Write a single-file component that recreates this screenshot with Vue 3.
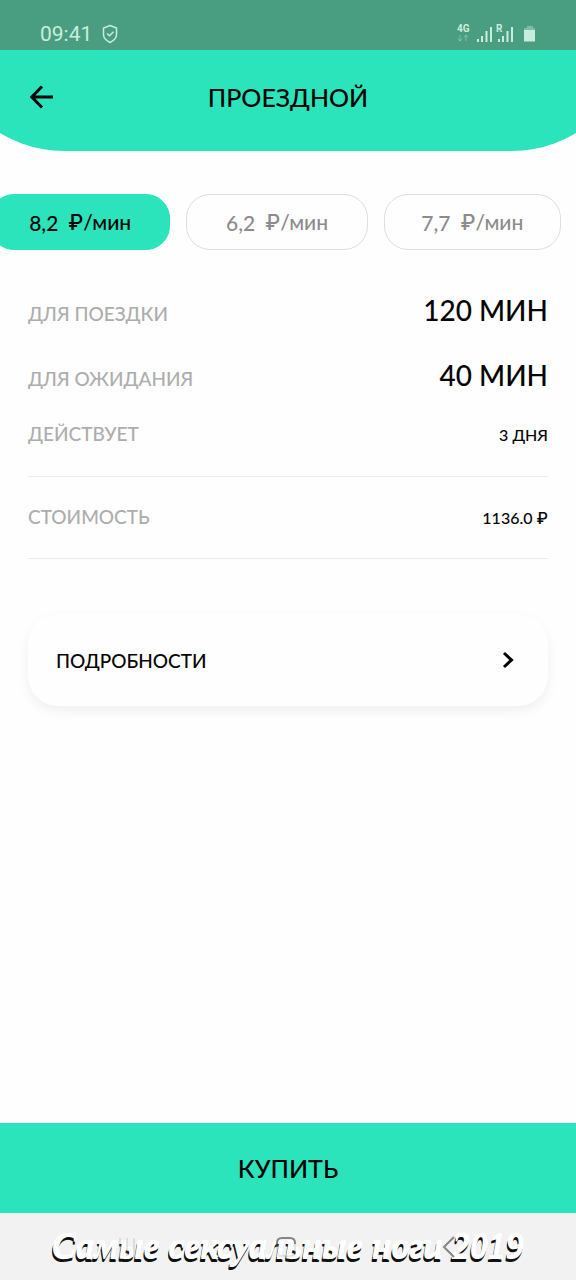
<script setup>
import { ref } from 'vue'

const rates = ['8,2', '6,2', '7,7']
const selected = ref('8,2')
</script>

<template>
  <div class="screen">
    <div class="status">
      <span class="clock">09:41</span>
      <svg class="shield" viewBox="0 0 16 20" aria-hidden="true">
        <path d="M8 1.500 14.500 4v6.500c0 3.600-3 6.300-6.500 8-3.500-1.700-6.500-4.400-6.500-8V4z" />
        <path d="m5 9.500 2.500 2.300 4-4" />
      </svg>
      <svg class="signals" viewBox="0 0 82 22" aria-hidden="true">
        <text x="0" y="9">4G</text>
        <path class="faint" d="M3 12v6M1 15.500l2 2.500 2-2.500M9 18v-6M7 14.500l2-2.500 2 2.500" />
        <path class="bar" d="M21 19v-3M25 19v-6M29.500 19v-11M34 19V4" />
        <text x="39" y="9">R</text>
        <path class="bar" d="M42 19v-3M46 19v-6M50.500 19v-11M55 19V4" />
        <path class="faint-fill" d="M70 3h6v2h2v3H67V5h3z" />
        <path class="cell" d="M67 7h11v11.500H67z" />
      </svg>
    </div>

    <header class="header">
      <button class="back" type="button" aria-label="Назад">
        <svg viewBox="0 0 24 24" aria-hidden="true"><path d="M23 12H2M12 1.500 1.800 12 12 22.500" /></svg>
      </button>
      <h1>ПРОЕЗДНОЙ</h1>
    </header>

    <main class="content">
      <div class="rates">
        <button
          v-for="rate in rates"
          :key="rate"
          type="button"
          class="rate"
          :class="{ active: selected === rate }"
          :aria-pressed="selected === rate"
          @click="selected = rate"
        ><span>{{ rate }}</span><span>₽/мин</span></button>
      </div>

      <dl class="details">
        <div class="row large"><dt>ДЛЯ ПОЕЗДКИ</dt><dd>120 МИН</dd></div>
        <div class="row large"><dt>ДЛЯ ОЖИДАНИЯ</dt><dd>40 МИН</dd></div>
        <div class="row term"><dt>ДЕЙСТВУЕТ</dt><dd>3 ДНЯ</dd></div>
        <div class="row price"><dt>СТОИМОСТЬ</dt><dd>1136.0 ₽</dd></div>
      </dl>

      <button class="more" type="button">
        <span>ПОДРОБНОСТИ</span>
        <svg viewBox="0 0 12 18" aria-hidden="true"><path d="m2 2 7.500 7L2 16" /></svg>
      </button>
    </main>

    <button class="buy" type="button">КУПИТЬ</button>

    <footer class="system">
      <p class="caption">Самые сексуальные ноги 2019</p>
      <svg class="nav" viewBox="0 0 360 26" aria-hidden="true">
        <path class="hidden-part" d="M12 4v18M19 4v18M26 4v18" />
        <path d="M169 10V9q0-5 5-5h8q5 0 5 5v1" />
        <path class="hidden-part" d="M169 10v7q0 5 5 5h8q5 0 5-5v-7" />
        <path d="m346 3-10 10 10 10" />
      </svg>
    </footer>
  </div>
</template>

<style>
body {
  margin: 0;
}
</style>

<style scoped>
.screen {
  display: flex;
  flex-direction: column;
  min-height: 100vh;
  overflow: hidden;
  background: #fefefe;
  color: #050505;
  font-family: Lato, Inter, "Liberation Sans", sans-serif;
  font-weight: 500;
}

button {
  border: 0;
  padding: 0;
  color: inherit;
  font: inherit;
  cursor: pointer;
}

svg {
  display: block;
  fill: none;
  stroke: currentColor;
}

.status {
  display: flex;
  align-items: center;
  box-sizing: border-box;
  height: 50px;
  padding: 17px 37px 0 40px;
  background: #499d81;
  color: #c9eddd;
  font-family: Roboto, sans-serif;
  font-weight: 400;
}

.clock {
  font-size: 21px;
  line-height: 32px;
}

.shield {
  width: 16px;
  height: 20px;
  margin-left: 10px;
  stroke-width: 1.5;
}

.signals {
  width: 82px;
  height: 22px;
  margin-left: auto;
}

.signals text {
  fill: currentColor;
  stroke: none;
  font-size: 10px;
  font-weight: 700;
}

.bar {
  stroke-width: 2;
}

.faint {
  opacity: 0.4;
}

.faint-fill {
  fill: currentColor;
  stroke: none;
  opacity: 0.4;
}

.cell {
  fill: currentColor;
  stroke: none;
}

.header {
  display: grid;
  grid-template-columns: 28px 1fr 28px;
  align-items: center;
  box-sizing: border-box;
  height: 101px;
  margin: 0 -48px;
  padding: 0 76px 8px;
  border-radius: 0 0 112px 112px / 0 0 101px 101px;
  background: #2be4bb;
}

.back {
  display: grid;
  place-items: center;
  width: 28px;
  height: 28px;
  background: none;
}

.back svg {
  width: 24px;
  height: 24px;
  stroke-width: 3;
}

h1 {
  margin: 0;
  text-align: center;
  font-size: 25px;
  line-height: 32px;
  font-weight: 500;
}

.content {
  flex: 1;
  padding: 43px 28px 0;
}

.rates {
  display: grid;
  grid-template-columns: 180fr 181fr 177fr;
  gap: 16px;
  margin: 0 -13px 0 -38px;
}

.rate {
  display: flex;
  justify-content: center;
  align-items: center;
  gap: 10px;
  height: 56px;
  border: 1px solid #dedede;
  border-radius: 24px;
  background: #fefefe;
  color: #8c8c8c;
  font-size: 21px;
}

.rate.active {
  border-color: #2be4bb;
  background: #2be4bb;
  color: #050505;
}

.details {
  margin: 28px 0 0;
}

.row {
  display: flex;
  justify-content: space-between;
  align-items: baseline;
  line-height: 40px;
}

.row dt {
  color: #adadad;
  font-size: 19px;
}

.row dd {
  margin: 0;
  font-size: 16px;
}

.large {
  padding: 12px 0 9px;
}

.large dd {
  font-size: 28px;
}

.term {
  padding: 6px 0 21px;
  border-bottom: 1px solid #ececec;
}

.price {
  padding: 20px 0;
  border-bottom: 1px solid #ececec;
}

.more {
  display: flex;
  justify-content: space-between;
  align-items: center;
  width: 100%;
  height: 92px;
  margin-top: 55px;
  padding: 0 34px 0 28px;
  border-radius: 30px;
  background: #fefefe;
  box-shadow: 0 5px 12px rgba(0, 0, 0, 0.06);
  font-size: 19px;
}

.more svg {
  width: 12px;
  height: 18px;
  stroke-width: 3;
}

.buy {
  height: 90px;
  background: #2be4bb;
  font-size: 25px;
}

.system {
  display: grid;
  place-items: center;
  height: 67px;
  background: #f2f2f2;
}

.nav,
.caption {
  grid-area: 1 / 1;
}

.nav {
  width: 360px;
  height: 26px;
  color: #858585;
  stroke-width: 2;
}

.hidden-part {
  opacity: 0.2;
}

.caption {
  margin: 0;
  color: #fff;
  font-family: "Liberation Serif", serif;
  font-size: 36px;
  line-height: 40px;
  font-style: italic;
  font-weight: 700;
  white-space: nowrap;
  text-shadow: 0 -2px #fff, -1px 2px #111, -1px 3px #111;
}
</style>
